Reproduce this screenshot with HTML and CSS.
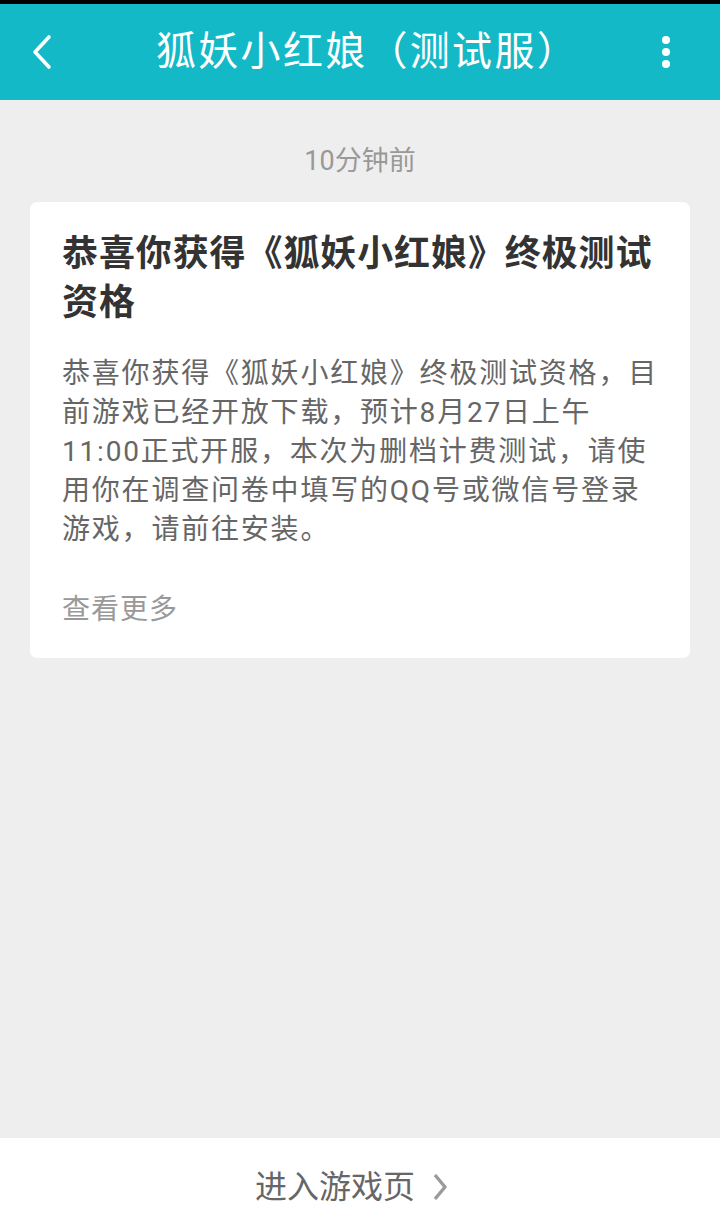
FILE: index.html
```html
<!DOCTYPE html>
<html lang="zh-CN">
<head>
<meta charset="utf-8">
<title>狐妖小红娘（测试服）</title>
<link rel="stylesheet" href="styles.css">
</head>
<body>
<div class="page">
  <div class="status-strip"></div>
  <header class="appbar">
    <button class="icon-btn back" aria-label="返回">
      <svg width="24" height="36" viewBox="0 0 24 36"><polyline points="19,3 5,18 19,33" fill="none" stroke="#fff" stroke-width="3.6" stroke-linecap="round" stroke-linejoin="round"/></svg>
    </button>
    <h1 class="appbar-title">狐妖小红娘（测试服）</h1>
    <button class="icon-btn more" aria-label="更多">
      <span class="dot"></span><span class="dot"></span><span class="dot"></span>
    </button>
  </header>
  <main class="content">
    <div class="timestamp">10分钟前</div>
    <article class="card">
      <h2 class="card-title">恭喜你获得《狐妖小红娘》终极测试资格</h2>
      <p class="card-body">恭喜你获得《狐妖小红娘》终极测试资格，目<br>前游戏已经开放下载，预计8月27日上午<br>11:00正式开服，本次为删档计费测试，请使<br>用你在调查问卷中填写的QQ号或微信号登录<br>游戏，请前往安装。</p>
      <a class="card-more">查看更多</a>
    </article>
  </main>
  <footer class="bottom-bar">
    <span class="bottom-text">进入游戏页</span>
    <svg class="chev" width="16" height="28" viewBox="0 0 16 28"><polyline points="3,2 13,14 3,26" fill="none" stroke="#9a9a9a" stroke-width="3.4" stroke-linejoin="round"/></svg>
  </footer>
</div>
</body>
</html>
```
FILE: styles.css
```css
* { box-sizing: border-box; }
html, body { margin: 0; padding: 0; }
body {
  font-family: Roboto, "Noto Sans CJK SC", "Noto Sans", sans-serif;
  background: #eeeeee;
  text-spacing-trim: space-all;
}
.page {
  width: 720px;
  height: 1227px;
  display: flex;
  flex-direction: column;
}
.status-strip {
  height: 4px;
  background: #000;
  flex: none;
}
.appbar {
  height: 96px;
  flex: none;
  background: #14b9c7;
  display: flex;
  align-items: center;
  justify-content: space-between;
  padding: 0 40px 0 30px;
}
.icon-btn {
  border: 0;
  background: none;
  padding: 0;
  width: 40px;
  height: 60px;
  display: flex;
  align-items: center;
  justify-content: center;
}
.back { justify-content: flex-start; }
.more {
  flex-direction: column;
  gap: 4px;
  width: 28px;
}
.dot {
  width: 8px;
  height: 8px;
  border-radius: 50%;
  background: #fff;
}
.appbar-title {
  margin: 0;
  color: #fff;
  font-size: 40px;
  font-weight: 400;
  line-height: 1;
  flex: 1;
  text-align: center;
  padding-left: 13px;
  white-space: nowrap;
  letter-spacing: 2.3px;
}
.content {
  flex: 1;
  padding: 0 30px;
  display: flex;
  flex-direction: column;
}
.timestamp {
  text-align: center;
  color: #999999;
  font-size: 27px;
  line-height: 36px;
  margin-top: 43px;
  margin-bottom: 23px;
}
.card {
  background: #fff;
  border-radius: 7px;
  padding: 28px 32px 29px;
  display: flex;
  flex-direction: column;
}
.card-title {
  margin: 0;
  font-size: 36px;
  letter-spacing: 0.9px;
  line-height: 49px;
  font-weight: 700;
  color: #333333;
}
.card-body {
  margin: 26px 0 0;
  font-size: 28px;
  line-height: 39px;
  color: #666666;
  letter-spacing: 1.8px;
  white-space: nowrap;
}
.card-more {
  margin-top: 41px;
  font-size: 28px;
  line-height: 39px;
  color: #999999;
  letter-spacing: 1px;
}
.bottom-bar {
  height: 89px;
  flex: none;
  background: #fff;
  display: flex;
  align-items: center;
  justify-content: center;
  gap: 17px;
  padding: 8px 17px 0 0;
}
.bottom-text {
  font-size: 32px;
  color: #666666;
  line-height: 1;
}
.chev { display: block; }
```
